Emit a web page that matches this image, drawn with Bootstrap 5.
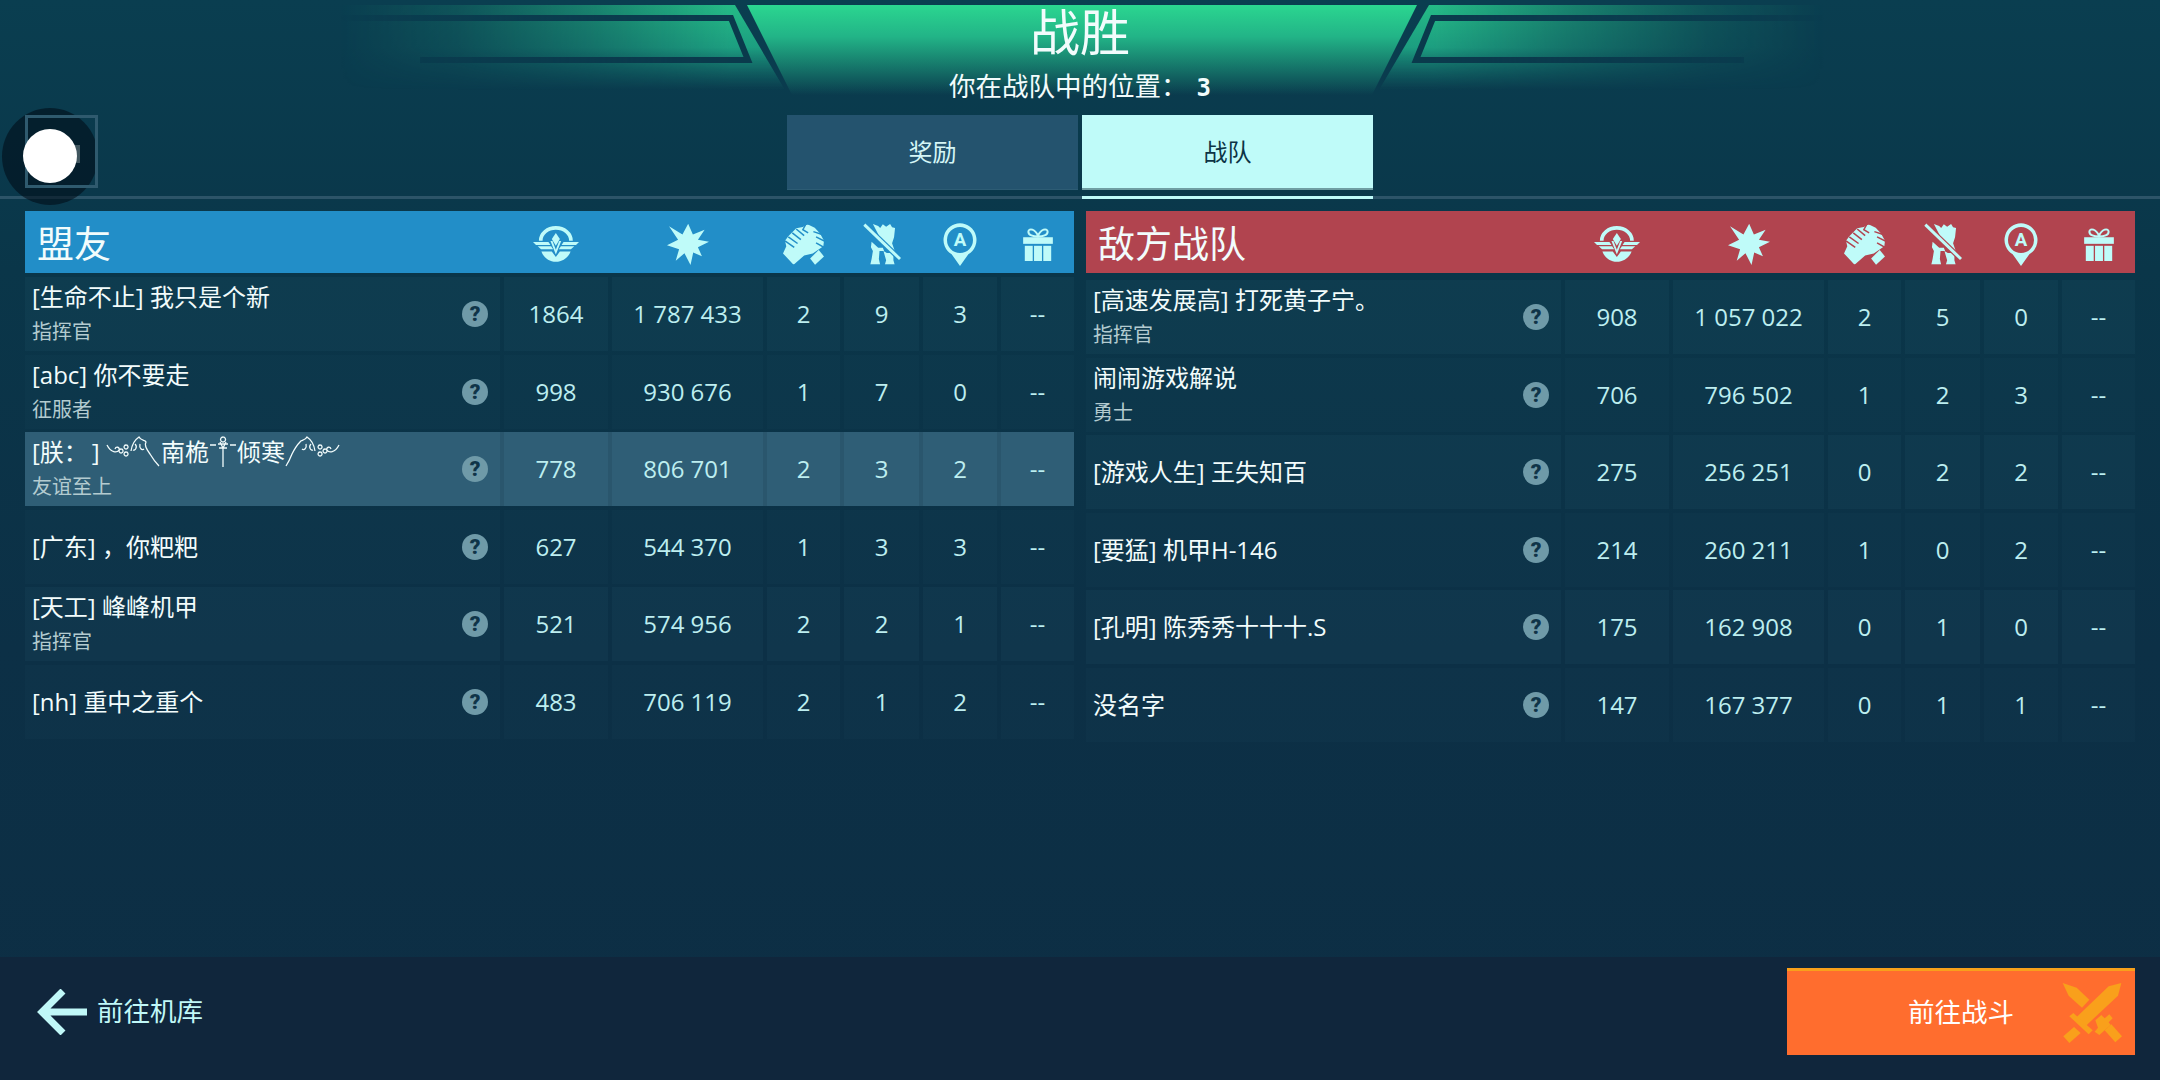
<!doctype html>
<html lang="zh-CN">

<head>
  <meta charset="utf-8">
  <meta name="viewport" content="width=device-width, initial-scale=1">
  <title>战胜</title>
  <link href="https://cdn.jsdelivr.net/npm/bootstrap@5.3.0/dist/css/bootstrap.min.css" rel="stylesheet">
  <style>
    body {
      font-family: "Open Sans", "Noto Sans CJK SC", sans-serif;
      background: #0c2e44;
      color: #f2fcfc;
      overflow: hidden;
    }

    .game-screen {
      width: 2160px;
      height: 1080px;
      position: relative;
      background: linear-gradient(180deg, #0a3e50 0, #0a3649 25%, #0c3046 60%, #0d2e44 100%);
    }

    .banner-art {
      position: absolute;
      top: 0;
      left: 0;
      width: 2164px;
      height: 200px;
    }

    .head-block {
      position: relative;
      height: 115px;
      padding-top: 2px;
    }

    .win-title {
      font-size: 50px;
      line-height: 60px;
      font-weight: 400;
      margin: 0;
    }

    .win-place {
      font-size: 26.5px;
      line-height: 48px;
    }

    .win-place b {
      font-family: "DejaVu Sans Mono", monospace;
      font-size: 24px;
      margin-left: 2px;
    }

    .tab-row {
      position: relative;
      gap: 4px;
    }

    .tab-btn {
      width: 291px;
      height: 75px;
      font-size: 24px;
      background: #24536e;
      color: #d5f6f6;
      border: 0;
      border-bottom: 1px solid #2d5c74;
      border-radius: 0;
    }

    .tab-btn.is-on {
      background: #bffbf9;
      color: #0c3345;
      border-bottom: 2px solid #6f9ea3;
    }

    .tab-rule {
      position: relative;
      height: 3px;
      margin-top: 6px;
      background: #2c5468;
    }

    .tab-rule span {
      display: block;
      width: 291px;
      height: 3px;
      margin-left: 1082px;
      background: #bffbf9;
    }

    .tables-wrap {
      position: relative;
      padding: 12px 25px 0;
      gap: 12px;
    }

    .team-box {
      width: 1049px;
    }

    .score-grid {
      display: grid;
      grid-template-columns: 475px 104px 151px 73px 75px 74px 73px;
      column-gap: 4px;
      align-items: stretch;
    }

    .team-head {
      height: 62px;
      color: #bffbf9;
    }

    .team-head.is-ally {
      background: #228ec8;
    }

    .team-head.is-foe {
      background: #b1444f;
    }

    .team-name {
      font-size: 37px;
      line-height: 66px;
      padding-left: 12px;
      color: #f2fcfc;
    }

    .team-rows {
      gap: 3.6px;
      margin-top: 4px;
    }

    .team-rows.is-shifted {
      margin-top: 7px;
    }

    .player-row {
      height: 74px;
    }

    .player-row>div {
      background: rgba(120, 200, 225, .045);
    }

    .player-row:nth-child(even)>div {
      background: rgba(120, 200, 225, .022);
    }

    .player-row.is-me {
      background: #2a566d;
    }

    .player-row.is-me>div {
      background: #2f5e76;
    }

    .name-cell {
      padding: 0 12px 0 7px;
    }

    .who {
      font-size: 24px;
      line-height: 36px;
      white-space: nowrap;
    }

    .rank {
      font-size: 20px;
      line-height: 34px;
      color: #b3cbd0;
    }

    .help-dot {
      width: 26px;
      height: 26px;
      border-radius: 50%;
      background: #6f9aa8;
      color: #0f3448;
      font-family: Roboto, sans-serif;
      font-size: 21px;
      font-weight: 900;
      line-height: 26px;
      text-align: center;
      flex: none;
    }

    .num-cell {
      font-size: 24px;
      color: #bdeef0;
    }

    .orn {
      vertical-align: middle;
      margin-top: -6px;
    }

    .bottom-bar {
      position: absolute;
      left: 0;
      right: 0;
      bottom: 0;
      height: 123px;
      padding: 11px 25px 25px 37px;
      background: #10263c;
    }

    .back-link {
      gap: 10px;
      font-size: 26.5px;
      color: #c0f8f8;
      text-decoration: none;
    }

    .fight-btn {
      position: relative;
      width: 348px;
      height: 87px;
      font-size: 26.5px;
      color: #fff;
      background: #ff6d2e;
      border: 0;
      border-top: 3px solid #f9a01b;
      border-radius: 0;
    }

    .fight-btn svg {
      position: absolute;
      right: 13px;
      top: 12px;
    }

    .hud-frame {
      position: absolute;
      left: 25px;
      top: 115px;
      width: 73px;
      height: 73px;
      border: 3px solid #2f5a6e;
    }

    .hud-bar {
      position: absolute;
      left: 75px;
      top: 145px;
      width: 5px;
      height: 18px;
      background: #8fb3ba;
    }

    .hud-halo {
      position: absolute;
      left: 2px;
      top: 108px;
      width: 96px;
      height: 97px;
      border-radius: 50%;
      background: rgba(0, 10, 20, .55);
    }

    .hud-dot {
      position: absolute;
      left: 23px;
      top: 129px;
      width: 54px;
      height: 54px;
      border-radius: 50%;
      background: #fff;
    }
  </style>
</head>

<body>
  <div class="game-screen d-flex flex-column">

    <!-- banner art and shared icons -->
    <svg class="banner-art" viewBox="0 0 2164 200" xmlns="http://www.w3.org/2000/svg">
      <defs>
        <linearGradient id="midFill" x1="0" y1="0" x2="0" y2="1">
          <stop offset="0" stop-color="#2bd690" />
          <stop offset=".35" stop-color="#22b487" />
          <stop offset="1" stop-color="#22b487" stop-opacity="0" />
        </linearGradient>
        <linearGradient id="wingFill" x1="0" y1="0" x2="0" y2="1">
          <stop offset="0" stop-color="#28c88c" />
          <stop offset=".5" stop-color="#1fa885" />
          <stop offset="1" stop-color="#178c7c" stop-opacity="0" />
        </linearGradient>
        <linearGradient id="wingFade" gradientUnits="userSpaceOnUse" x1="340" y1="0" x2="730" y2="0">
          <stop offset="0" stop-color="#000" />
          <stop offset=".3" stop-color="#2a2a2a" />
          <stop offset=".65" stop-color="#808080" />
          <stop offset="1" stop-color="#e8e8e8" />
        </linearGradient>
        <mask id="wingMask" maskUnits="userSpaceOnUse" x="0" y="0" width="2164" height="200">
          <rect width="2164" height="200" fill="url(#wingFade)" />
        </mask>
        <g id="wingLeft" mask="url(#wingMask)">
          <polygon points="250,5 735,5 785,90 250,90" fill="url(#wingFill)" />
          <path d="M300 18 H731 L748 60 H420" fill="none" stroke="#0b3a4c" stroke-width="6" />
        </g>

        <symbol id="icoLevel" viewBox="0 0 137 106">
          <path d="M23 43 A45 38 0 0 1 113 43" fill="none" stroke="currentColor" stroke-width="11" />
          <polygon points="68,20 80,38 68,58 56,38" fill="currentColor" />
          <polygon points="0,47 46,47 52,56 9,56" fill="currentColor" />
          <polygon points="14,60 54,60 60,69 24,69" fill="currentColor" />
          <polygon points="137,47 91,47 85,56 128,56" fill="currentColor" />
          <polygon points="123,60 83,60 77,69 113,69" fill="currentColor" />
          <polygon points="52,44 58,44 68,70 78,44 84,44 68,84" fill="currentColor" />
          <path d="M25 75 H56 L68 92 L80 75 H112 C105 94 88 106 68 106 C48 106 32 94 25 75Z" fill="currentColor" />
        </symbol>
        <symbol id="icoBurst" viewBox="0 0 125 125">
          <polygon fill="currentColor"
            points="63,2 77,34 112,20 92,50 125,56 92,72 104,99 78,88 70,125 52,90 26,112 36,78 0,66 33,50 6,10 46,34" />
        </symbol>
        <mask id="handsMask" maskUnits="userSpaceOnUse" x="0" y="0" width="124" height="122">
          <rect width="124" height="122" fill="#fff" />
          <g stroke="#000" stroke-width="4.5" fill="none">
            <path d="M6 50 L34 70" />
            <path d="M16 38 L44 58" />
            <path d="M28 26 L54 46" />
            <path d="M40 14 L64 34" />
            <path d="M128 52 L100 38" />
            <path d="M116 30 L92 22" />
            <path d="M128 72 L100 56" />
            <path d="M70 -2 L60 16 L76 26" />
          </g>
        </mask>
        <symbol id="icoHands" viewBox="0 0 124 122">
          <polygon mask="url(#handsMask)" fill="currentColor"
            points="0,88 10,66 6,50 16,36 28,24 40,12 60,8 74,0 96,10 112,28 124,50 122,66 90,88 64,94 32,122" />
          <polygon fill="currentColor" points="82,103 108,78 124,97 97,122" />
        </symbol>
        <mask id="slashMask" maskUnits="userSpaceOnUse" x="0" y="0" width="115" height="125">
          <rect width="115" height="125" fill="#fff" />
          <path d="M4 4 L112 108" stroke="#000" stroke-width="16" />
        </mask>
        <symbol id="icoMech" viewBox="0 0 115 125">
          <g mask="url(#slashMask)" fill="currentColor">
            <polygon points="30,2 46,8 52,14 60,3 70,10 82,2 88,12 97,14 94,42 88,60 96,84 60,60" />
            <polygon points="26,56 46,74 60,74 64,84 50,84 48,108 52,125 22,125 26,108 30,84 24,72" />
            <polygon points="62,84 72,90 92,90 92,112 96,125 66,125 70,112" />
          </g>
          <path d="M4 4 L112 108" stroke="currentColor" stroke-width="9" fill="none" />
        </symbol>
        <symbol id="icoPin" viewBox="0 0 102 129">
          <path d="M51 1 A50 50 0 0 1 76 94 L51 129 L26 94 A50 50 0 0 1 51 1Z M51 12 A39 39 0 1 0 51 90 A39 39 0 1 0 51 12Z" fill="currentColor" fill-rule="evenodd" />
          <text x="51" y="70" text-anchor="middle" font-family="Roboto, sans-serif" font-size="56" font-weight="700" fill="currentColor">A</text>
        </symbol>
        <symbol id="icoGift" viewBox="0 0 90 100">
          <path d="M45 26 C32 26 14 22 16 10 C18 0 36 2 45 24 C54 2 72 0 74 10 C76 22 58 26 45 26Z" fill="none" stroke="currentColor" stroke-width="6" />
          <rect x="0" y="28" width="90" height="20" fill="currentColor" />
          <rect x="5" y="54" width="24" height="46" fill="currentColor" />
          <rect x="33" y="54" width="24" height="46" fill="currentColor" />
          <rect x="61" y="54" width="24" height="46" fill="currentColor" />
        </symbol>
      </defs>

      <polygon points="747,5 1417,5 1372,95 792,95" fill="url(#midFill)" />
      <use href="#wingLeft" />
      <use href="#wingLeft" transform="translate(2164 0) scale(-1 1)" />
    </svg>

    <!-- title and tabs -->
    <div class="head-block text-center">
      <h1 class="win-title">战胜</h1>
      <div class="win-place">你在战队中的位置： <b>3</b></div>
    </div>
    <div class="tab-row d-flex justify-content-center">
      <button type="button" class="btn tab-btn">奖励</button>
      <button type="button" class="btn tab-btn is-on">战队</button>
    </div>
    <div class="tab-rule"><span></span></div>

    <!-- teams -->
    <div class="tables-wrap d-flex">

      <div class="team-box">
        <div class="team-head is-ally score-grid">
          <div class="team-name">盟友</div>
          <div class="d-flex align-items-center justify-content-center"><svg width="46" height="36"><use href="#icoLevel" /></svg></div>
          <div class="d-flex align-items-center justify-content-center"><svg width="42" height="42"><use href="#icoBurst" /></svg></div>
          <div class="d-flex align-items-center justify-content-center"><svg width="41" height="41"><use href="#icoHands" /></svg></div>
          <div class="d-flex align-items-center justify-content-center"><svg width="38" height="42"><use href="#icoMech" /></svg></div>
          <div class="d-flex align-items-center justify-content-center"><svg width="34" height="43"><use href="#icoPin" /></svg></div>
          <div class="d-flex align-items-center justify-content-center"><svg width="30" height="33"><use href="#icoGift" /></svg></div>
        </div>
        <div class="team-rows d-flex flex-column">
          <div class="player-row score-grid">
            <div class="name-cell d-flex align-items-center justify-content-between">
              <div><div class="who">[生命不止] 我只是个新</div><div class="rank">指挥官</div></div><span class="help-dot">?</span>
            </div>
            <div class="num-cell d-flex align-items-center justify-content-center">1864</div>
            <div class="num-cell d-flex align-items-center justify-content-center">1 787 433</div>
            <div class="num-cell d-flex align-items-center justify-content-center">2</div>
            <div class="num-cell d-flex align-items-center justify-content-center">9</div>
            <div class="num-cell d-flex align-items-center justify-content-center">3</div>
            <div class="num-cell d-flex align-items-center justify-content-center">--</div>
          </div>
          <div class="player-row score-grid">
            <div class="name-cell d-flex align-items-center justify-content-between">
              <div><div class="who">[abc] 你不要走</div><div class="rank">征服者</div></div><span class="help-dot">?</span>
            </div>
            <div class="num-cell d-flex align-items-center justify-content-center">998</div>
            <div class="num-cell d-flex align-items-center justify-content-center">930 676</div>
            <div class="num-cell d-flex align-items-center justify-content-center">1</div>
            <div class="num-cell d-flex align-items-center justify-content-center">7</div>
            <div class="num-cell d-flex align-items-center justify-content-center">0</div>
            <div class="num-cell d-flex align-items-center justify-content-center">--</div>
          </div>
          <div class="player-row score-grid is-me">
            <div class="name-cell d-flex align-items-center justify-content-between">
              <div>
                <div class="who">[朕：&#8201;]
                  <svg class="orn" width="55" height="31" viewBox="0 0 55 31" fill="none" stroke="#f2fcfc" stroke-width="1.3"><path d="M1 9 C5 17 11 17 13 14 C14 11 10 10 9 13 M15 13 a2 2 0 1 0 .1 0 M20 9 a2 2 0 1 0 .1 0 M20 16 a2 2 0 1 0 .1 0 M25 15 C26 8 30 3 33 1 C35 5 39 4 40 6 C38 9 41 14 44 18 C47 23 50 27 53 30 M29 8 C32 11 29 15 27 14 M34 8 C33 12 36 15 38 13" /></svg>南桅<svg class="orn" width="28" height="31" viewBox="0 0 28 31" fill="none" stroke="#f2fcfc" stroke-width="1.3"><path d="M1 9 H7 M21 9 H27 M14 12 V31 M14 1 a2.5 2.5 0 1 0 .1 0 M9 8 H19 M10 12 H18 M11 6 L14 12 L17 6" /></svg>倾寒<svg class="orn" width="55" height="31" viewBox="0 0 55 31" fill="none" stroke="#f2fcfc" stroke-width="1.3"><path d="M54 9 C50 17 44 17 42 14 C41 11 45 10 46 13 M40 13 a2 2 0 1 0 .1 0 M35 9 a2 2 0 1 0 .1 0 M35 16 a2 2 0 1 0 .1 0 M30 15 C29 8 25 3 22 1 C20 5 16 4 15 6 C12 9 9 14 7 18 C5 23 3 27 1 30 M26 8 C23 11 26 15 28 14 M21 8 C22 12 19 15 17 13" /></svg>
                </div>
                <div class="rank">友谊至上</div>
              </div><span class="help-dot">?</span>
            </div>
            <div class="num-cell d-flex align-items-center justify-content-center">778</div>
            <div class="num-cell d-flex align-items-center justify-content-center">806 701</div>
            <div class="num-cell d-flex align-items-center justify-content-center">2</div>
            <div class="num-cell d-flex align-items-center justify-content-center">3</div>
            <div class="num-cell d-flex align-items-center justify-content-center">2</div>
            <div class="num-cell d-flex align-items-center justify-content-center">--</div>
          </div>
          <div class="player-row score-grid">
            <div class="name-cell d-flex align-items-center justify-content-between">
              <div class="who">[广东] ，你粑粑</div><span class="help-dot">?</span>
            </div>
            <div class="num-cell d-flex align-items-center justify-content-center">627</div>
            <div class="num-cell d-flex align-items-center justify-content-center">544 370</div>
            <div class="num-cell d-flex align-items-center justify-content-center">1</div>
            <div class="num-cell d-flex align-items-center justify-content-center">3</div>
            <div class="num-cell d-flex align-items-center justify-content-center">3</div>
            <div class="num-cell d-flex align-items-center justify-content-center">--</div>
          </div>
          <div class="player-row score-grid">
            <div class="name-cell d-flex align-items-center justify-content-between">
              <div><div class="who">[天工] 峰峰机甲</div><div class="rank">指挥官</div></div><span class="help-dot">?</span>
            </div>
            <div class="num-cell d-flex align-items-center justify-content-center">521</div>
            <div class="num-cell d-flex align-items-center justify-content-center">574 956</div>
            <div class="num-cell d-flex align-items-center justify-content-center">2</div>
            <div class="num-cell d-flex align-items-center justify-content-center">2</div>
            <div class="num-cell d-flex align-items-center justify-content-center">1</div>
            <div class="num-cell d-flex align-items-center justify-content-center">--</div>
          </div>
          <div class="player-row score-grid">
            <div class="name-cell d-flex align-items-center justify-content-between">
              <div class="who">[nh] 重中之重个</div><span class="help-dot">?</span>
            </div>
            <div class="num-cell d-flex align-items-center justify-content-center">483</div>
            <div class="num-cell d-flex align-items-center justify-content-center">706 119</div>
            <div class="num-cell d-flex align-items-center justify-content-center">2</div>
            <div class="num-cell d-flex align-items-center justify-content-center">1</div>
            <div class="num-cell d-flex align-items-center justify-content-center">2</div>
            <div class="num-cell d-flex align-items-center justify-content-center">--</div>
          </div>
        </div>
      </div>

      <div class="team-box">
        <div class="team-head is-foe score-grid">
          <div class="team-name">敌方战队</div>
          <div class="d-flex align-items-center justify-content-center"><svg width="46" height="36"><use href="#icoLevel" /></svg></div>
          <div class="d-flex align-items-center justify-content-center"><svg width="42" height="42"><use href="#icoBurst" /></svg></div>
          <div class="d-flex align-items-center justify-content-center"><svg width="41" height="41"><use href="#icoHands" /></svg></div>
          <div class="d-flex align-items-center justify-content-center"><svg width="38" height="42"><use href="#icoMech" /></svg></div>
          <div class="d-flex align-items-center justify-content-center"><svg width="34" height="43"><use href="#icoPin" /></svg></div>
          <div class="d-flex align-items-center justify-content-center"><svg width="30" height="33"><use href="#icoGift" /></svg></div>
        </div>
        <div class="team-rows is-shifted d-flex flex-column">
          <div class="player-row score-grid">
            <div class="name-cell d-flex align-items-center justify-content-between">
              <div><div class="who">[高速发展高] 打死黄子宁。</div><div class="rank">指挥官</div></div><span class="help-dot">?</span>
            </div>
            <div class="num-cell d-flex align-items-center justify-content-center">908</div>
            <div class="num-cell d-flex align-items-center justify-content-center">1 057 022</div>
            <div class="num-cell d-flex align-items-center justify-content-center">2</div>
            <div class="num-cell d-flex align-items-center justify-content-center">5</div>
            <div class="num-cell d-flex align-items-center justify-content-center">0</div>
            <div class="num-cell d-flex align-items-center justify-content-center">--</div>
          </div>
          <div class="player-row score-grid">
            <div class="name-cell d-flex align-items-center justify-content-between">
              <div><div class="who">闹闹游戏解说</div><div class="rank">勇士</div></div><span class="help-dot">?</span>
            </div>
            <div class="num-cell d-flex align-items-center justify-content-center">706</div>
            <div class="num-cell d-flex align-items-center justify-content-center">796 502</div>
            <div class="num-cell d-flex align-items-center justify-content-center">1</div>
            <div class="num-cell d-flex align-items-center justify-content-center">2</div>
            <div class="num-cell d-flex align-items-center justify-content-center">3</div>
            <div class="num-cell d-flex align-items-center justify-content-center">--</div>
          </div>
          <div class="player-row score-grid">
            <div class="name-cell d-flex align-items-center justify-content-between">
              <div class="who">[游戏人生] 王失知百</div><span class="help-dot">?</span>
            </div>
            <div class="num-cell d-flex align-items-center justify-content-center">275</div>
            <div class="num-cell d-flex align-items-center justify-content-center">256 251</div>
            <div class="num-cell d-flex align-items-center justify-content-center">0</div>
            <div class="num-cell d-flex align-items-center justify-content-center">2</div>
            <div class="num-cell d-flex align-items-center justify-content-center">2</div>
            <div class="num-cell d-flex align-items-center justify-content-center">--</div>
          </div>
          <div class="player-row score-grid">
            <div class="name-cell d-flex align-items-center justify-content-between">
              <div class="who">[要猛] 机甲H-146</div><span class="help-dot">?</span>
            </div>
            <div class="num-cell d-flex align-items-center justify-content-center">214</div>
            <div class="num-cell d-flex align-items-center justify-content-center">260 211</div>
            <div class="num-cell d-flex align-items-center justify-content-center">1</div>
            <div class="num-cell d-flex align-items-center justify-content-center">0</div>
            <div class="num-cell d-flex align-items-center justify-content-center">2</div>
            <div class="num-cell d-flex align-items-center justify-content-center">--</div>
          </div>
          <div class="player-row score-grid">
            <div class="name-cell d-flex align-items-center justify-content-between">
              <div class="who">[孔明] 陈秀秀十十十.S</div><span class="help-dot">?</span>
            </div>
            <div class="num-cell d-flex align-items-center justify-content-center">175</div>
            <div class="num-cell d-flex align-items-center justify-content-center">162 908</div>
            <div class="num-cell d-flex align-items-center justify-content-center">0</div>
            <div class="num-cell d-flex align-items-center justify-content-center">1</div>
            <div class="num-cell d-flex align-items-center justify-content-center">0</div>
            <div class="num-cell d-flex align-items-center justify-content-center">--</div>
          </div>
          <div class="player-row score-grid">
            <div class="name-cell d-flex align-items-center justify-content-between">
              <div class="who">没名字</div><span class="help-dot">?</span>
            </div>
            <div class="num-cell d-flex align-items-center justify-content-center">147</div>
            <div class="num-cell d-flex align-items-center justify-content-center">167 377</div>
            <div class="num-cell d-flex align-items-center justify-content-center">0</div>
            <div class="num-cell d-flex align-items-center justify-content-center">1</div>
            <div class="num-cell d-flex align-items-center justify-content-center">1</div>
            <div class="num-cell d-flex align-items-center justify-content-center">--</div>
          </div>
        </div>
      </div>
    </div>

    <!-- bottom bar -->
    <div class="bottom-bar d-flex justify-content-between align-items-center">
      <a href="#" class="back-link d-flex align-items-center">
        <svg width="50" height="46" viewBox="0 0 50 46" fill="none" stroke="#c0f8f8" stroke-width="7"><path d="M50 23 H5 M26 2 L5 23 L26 44" /></svg>
        <span>前往机库</span>
      </a>
      <button type="button" class="btn fight-btn">前往战斗
        <svg width="60" height="60" viewBox="0 0 180 180" fill="#f9a01b">
          <polygon points="178,0 168,38 72,128 44,102 140,10" />
          <polygon points="22,100 34,90 92,142 80,154" />
          <polygon points="36,132 56,150 22,180 4,160" />
          <polygon points="2,0 44,14 82,50 60,74 20,38" />
          <polygon points="100,112 118,96 128,106 142,94 152,106 140,118 146,126 112,156 98,146 108,134" />
          <polygon points="128,142 148,124 180,160 160,178" />
        </svg>
      </button>
    </div>

    <!-- screen overlay top left -->
    <div class="hud-bar"></div>
    <div class="hud-halo"></div>
    <div class="hud-frame"></div>
    <div class="hud-dot"></div>
  </div>

  <script src="https://cdn.jsdelivr.net/npm/bootstrap@5.3.0/dist/js/bootstrap.bundle.min.js"></script>
</body>

</html>
